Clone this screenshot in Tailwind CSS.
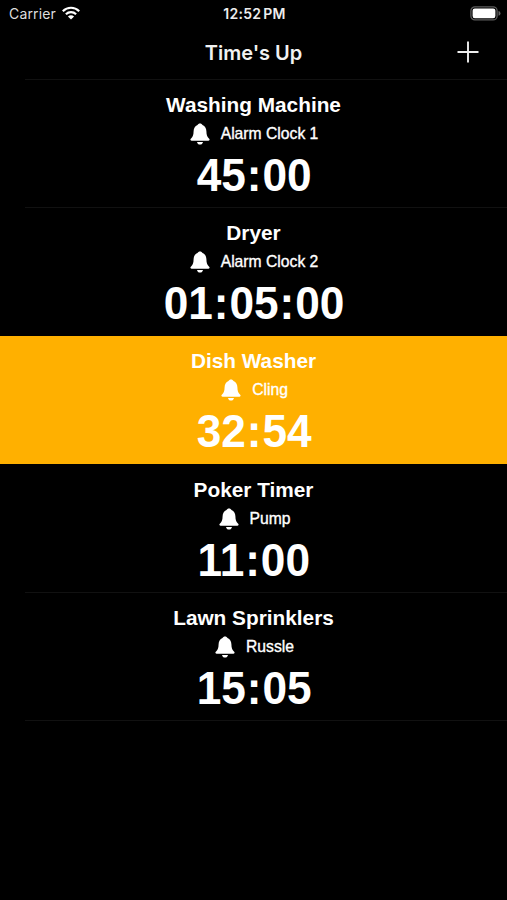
<!DOCTYPE html>
<html lang="en">
<head>
<meta charset="utf-8">
<title>Time's Up</title>
<script src="https://cdn.jsdelivr.net/npm/@tailwindcss/browser@4"></script>
</head>
<body class="bg-black text-white w-[507px] h-[900px] overflow-hidden font-['Liberation_Sans',sans-serif]">
<svg class="hidden"><symbol id="bell" viewBox="0 0 20 22"><path fill="currentColor" d="M10 .5C8.800.5 7.900 1.100 7.500 2C4.900 3 3.700 5.300 3.600 8.200C3.500 12 2.900 13.500 1.300 15.200C.5 16 .2 16.500 .5 17.100C.7 17.600 1.100 17.700 1.700 17.700H18.300C18.900 17.700 19.300 17.600 19.500 17.100C19.800 16.500 19.500 16 18.700 15.200C17.100 13.500 16.500 12 16.400 8.200C16.300 5.300 15.100 3 12.500 2C12.100 1.100 11.200.5 10 .5ZM7 18.900H13C12.700 20.500 11.500 21.500 10 21.500S7.300 20.500 7 18.900Z"/></symbol></svg>
<header class="h-[79px] font-[Inter,sans-serif]">
  <div class="h-7 grid grid-cols-[1fr_auto_1fr] items-center pl-[9px] pr-[6px] text-[14px]">
    <div class="flex items-center gap-[6px] text-[#dedede]"><span class="text-[14px] tracking-[0.15px] pb-[2px]">Carrier</span>
      <svg class="w-[18px] h-[14px] mb-[2px] text-white" viewBox="0 0 18 14" fill="none" stroke="currentColor" stroke-width="2.200"><path d="M.8 5.200C5.500.6 12.500.6 17.200 5.200M3.900 8.300C6.800 5.500 11.200 5.500 14.100 8.300"/><path fill="currentColor" stroke="none" d="M9 13.600L5.900 10.500Q9 8 12.100 10.500Z"/></svg></div>
    <div class="text-center font-semibold text-[#ededed] whitespace-nowrap tracking-[0.25px] pb-[2px] pr-px">12:52<span class="ml-[2px]">PM</span></div>
    <svg class="justify-self-end mb-[2px] w-[31px] h-[15px]" viewBox="0 0 31 15"><rect x=".9" y=".9" width="26.200" height="13" rx="4" fill="none" stroke="#5c5c5c" stroke-width="1.300"/><rect x="2.600" y="2.600" width="22.800" height="9.600" rx="2.200" fill="#fff"/><path d="M28.500 5Q30.500 5.500 30.500 7.400T28.500 9.800Z" fill="#666"/></svg>
  </div>
  <div class="h-12 grid grid-cols-[1fr_auto_1fr] items-center pr-7">
    <span></span><h1 class="text-[20px] font-semibold text-[#f2f2f2] pl-7 pt-px">Time's Up</h1>
    <button class="justify-self-end" aria-label="Add"><svg class="w-[22px] h-[22px]" viewBox="0 0 22 22" stroke="#eee" stroke-width="1.900"><path d="M.5 11H21.500M11 .5V21.500"/></svg></button>
  </div>
</header>
<div class="ml-[25px] h-px bg-[#111]"></div>
<main>
  <section class="h-32 flex flex-col items-center pt-[13px]">
    <h2 class="text-[20.8px] leading-6 font-bold">Washing Machine</h2>
    <div class="flex h-[26px] mt-1 pl-px items-center gap-[11px] text-[15.7px] [-webkit-text-stroke:0.35px]"><svg class="w-5 h-[22px]"><use href="#bell"/></svg><span>Alarm Clock 1</span></div>
    <div class="text-[47px] leading-[52px] mt-[2px] pl-px font-bold scale-x-[0.94]">45<span class="mx-px">:</span>00</div>
  </section>
  <section class="h-32 flex flex-col items-center pt-[13px] relative before:absolute before:top-[-1px] before:left-[25px] before:right-0 before:h-px before:bg-[#111]">
    <h2 class="text-[20.8px] leading-6 font-bold">Dryer</h2>
    <div class="flex h-[26px] mt-1 pl-px items-center gap-[11px] text-[15.7px] [-webkit-text-stroke:0.35px]"><svg class="w-5 h-[22px]"><use href="#bell"/></svg><span>Alarm Clock 2</span></div>
    <div class="text-[47px] leading-[52px] mt-[2px] pl-px font-bold scale-x-[0.94]">01<span class="mx-px">:</span>05<span class="mx-px">:</span>00</div>
  </section>
  <section class="h-32 flex flex-col items-center pt-[13px] bg-[#ffb000]">
    <h2 class="text-[20.8px] leading-6 font-bold">Dish Washer</h2>
    <div class="flex h-[26px] mt-1 pl-[2px] items-center gap-[11px] text-[15.7px] [-webkit-text-stroke:0.35px]"><svg class="w-5 h-[22px]"><use href="#bell"/></svg><span>Cling</span></div>
    <div class="text-[47px] leading-[52px] mt-[2px] pl-px font-bold scale-x-[0.94]">32<span class="mx-px">:</span>54</div>
  </section>
  <section class="h-[129px] flex flex-col items-center pt-[14px]">
    <h2 class="text-[20.8px] leading-6 font-bold">Poker Timer</h2>
    <div class="flex h-[26px] mt-1 pl-[2px] items-center gap-[11px] text-[15.7px] [-webkit-text-stroke:0.35px]"><svg class="w-5 h-[22px]"><use href="#bell"/></svg><span>Pump</span></div>
    <div class="text-[47px] leading-[52px] mt-[2px] pl-px font-bold scale-x-[0.94]">11<span class="mx-px">:</span>00</div>
  </section>
  <section class="h-32 flex flex-col items-center pt-[13px] relative before:absolute before:top-[-1px] before:left-[25px] before:right-0 before:h-px before:bg-[#111]">
    <h2 class="text-[20.8px] leading-6 font-bold">Lawn Sprinklers</h2>
    <div class="flex h-[26px] mt-1 pl-[2px] items-center gap-[11px] text-[15.7px] [-webkit-text-stroke:0.35px]"><svg class="w-5 h-[22px]"><use href="#bell"/></svg><span>Russle</span></div>
    <div class="text-[47px] leading-[52px] mt-[2px] pl-px font-bold scale-x-[0.94]">15<span class="mx-px">:</span>05</div>
  </section>
  <div class="ml-[25px] -mt-px h-px bg-[#111]"></div>
</main>
</body>
</html>
